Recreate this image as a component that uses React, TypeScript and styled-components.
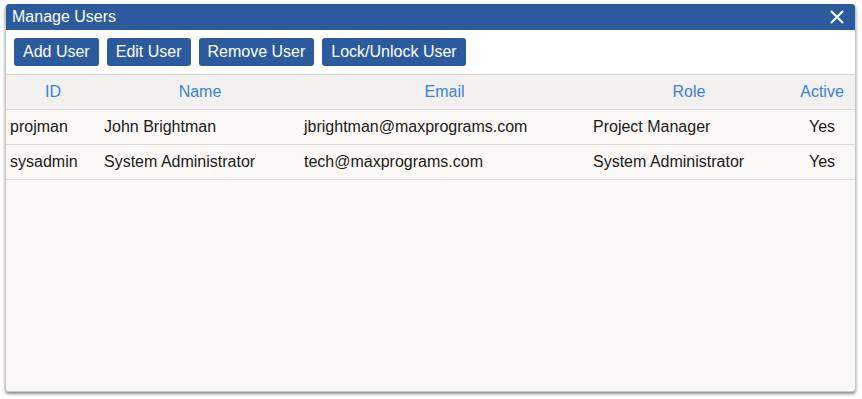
import styled, { createGlobalStyle } from "styled-components";

const GlobalStyle = createGlobalStyle`
  html, body {
    margin: 0;
    padding: 0;
    background: #ffffff;
    font-family: "Liberation Sans", Arial, sans-serif;
  }
`;

const Page = styled.div`
  width: 862px;
  height: 399px;
  padding: 4px 6px 8px 5px;
  box-sizing: border-box;
`;

const Dialog = styled.div`
  height: 387px;
  display: flex;
  flex-direction: column;
  background: #faf9f7;
  border: 1px solid #c9c8c6;
  border-top: none;
  border-radius: 4px;
  overflow: hidden;
  box-shadow: 0 2px 3px rgba(0, 0, 0, 0.45);
`;

const TitleBar = styled.div`
  height: 26px;
  background: #2b5b9d;
  color: #ffffff;
  display: flex;
  align-items: center;
  justify-content: space-between;
  padding: 0 10px 0 6px;
  font-size: 16px;
`;

const CloseButton = styled.button`
  width: 16px;
  height: 16px;
  padding: 0;
  border: none;
  background: transparent;
  display: flex;
  align-items: center;
  justify-content: center;
  cursor: pointer;
`;

const Toolbar = styled.div`
  height: 44px;
  background: #ffffff;
  display: flex;
  align-items: center;
  gap: 8px;
  padding: 0 8px;
  border-bottom: 1px solid #d8d7d5;
`;

const ToolButton = styled.button`
  height: 28px;
  padding: 0 9px;
  border: none;
  border-radius: 3px;
  background: #2b5b9d;
  color: #ffffff;
  font-family: "Liberation Sans", Arial, sans-serif;
  font-size: 16px;
  cursor: pointer;
`;

const Table = styled.table`
  width: 100%;
  border-collapse: collapse;
  table-layout: fixed;
  font-size: 16px;
`;

const HeadCell = styled.th<{ $width: number }>`
  width: ${(p) => p.$width}px;
  height: 34px;
  padding: 0;
  background: #f2f1f0;
  color: #3a82d8;
  font-weight: normal;
  text-align: center;
  border-bottom: 1px solid #dcdbd9;
`;

const Cell = styled.td<{ $center?: boolean }>`
  height: 34px;
  padding: 0 4px;
  color: #1a1a1a;
  text-align: ${(p) => (p.$center ? "center" : "left")};
  border-bottom: 1px solid #dcdbd9;
  white-space: nowrap;
`;

const users = [
  { id: "projman", name: "John Brightman", email: "jbrightman@maxprograms.com", role: "Project Manager", active: "Yes" },
  { id: "sysadmin", name: "System Administrator", email: "tech@maxprograms.com", role: "System Administrator", active: "Yes" },
];

export default function App() {
  return (
    <>
      <GlobalStyle />
      <Page>
        <Dialog>
          <TitleBar>
            <span>Manage Users</span>
            <CloseButton aria-label="Close">
              <svg width="14" height="14" viewBox="0 0 14 14">
                <path d="M1 1L13 13M13 1L1 13" stroke="#ffffff" strokeWidth="2" />
              </svg>
            </CloseButton>
          </TitleBar>
          <Toolbar>
            <ToolButton>Add User</ToolButton>
            <ToolButton>Edit User</ToolButton>
            <ToolButton>Remove User</ToolButton>
            <ToolButton>Lock/Unlock User</ToolButton>
          </Toolbar>
          <Table>
            <thead>
              <tr>
                <HeadCell $width={94}>ID</HeadCell>
                <HeadCell $width={200}>Name</HeadCell>
                <HeadCell $width={289}>Email</HeadCell>
                <HeadCell $width={200}>Role</HeadCell>
                <HeadCell $width={66}>Active</HeadCell>
              </tr>
            </thead>
            <tbody>
              {users.map((u) => (
                <tr key={u.id}>
                  <Cell>{u.id}</Cell>
                  <Cell>{u.name}</Cell>
                  <Cell>{u.email}</Cell>
                  <Cell>{u.role}</Cell>
                  <Cell $center>{u.active}</Cell>
                </tr>
              ))}
            </tbody>
          </Table>
        </Dialog>
      </Page>
    </>
  );
}
